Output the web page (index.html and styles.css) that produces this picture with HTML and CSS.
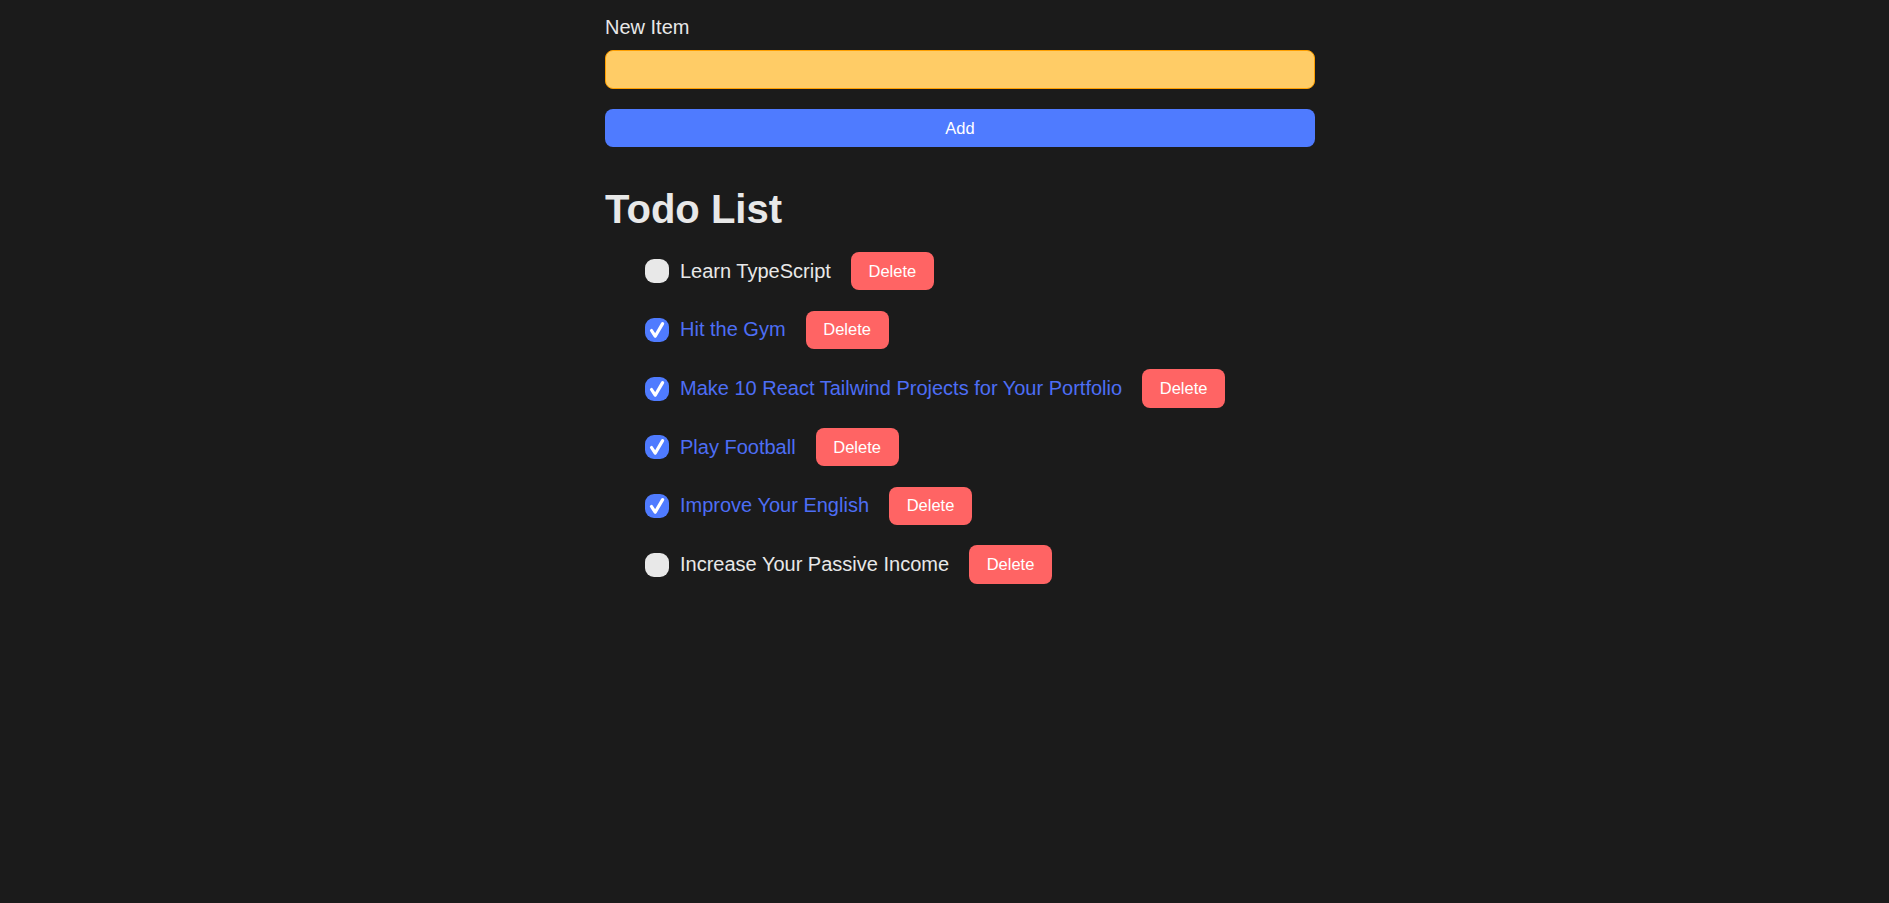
FILE: index.html
```html
<!DOCTYPE html>
<html lang="en">
<head>
<meta charset="utf-8">
<title>Todo List</title>
<link rel="stylesheet" href="styles.css">
</head>
<body>
<div class="app">
  <form class="new-item-form">
    <label class="form-label" for="item">New Item</label>
    <input class="form-input" type="text" id="item">
    <button class="btn-add" type="button">Add</button>
  </form>
  <h1 class="header">Todo List</h1>
  <ul class="list">
    <li class="row">
      <span class="box"></span>
      <span class="title">Learn TypeScript</span>
      <button class="btn-delete" type="button">Delete</button>
    </li>
    <li class="row done">
      <span class="box"><svg viewBox="0 0 24 24" width="24" height="24"><path d="M6.5 12.5 L10.2 18.2 L17.6 5.6" fill="none" stroke="#fff" stroke-width="3.2" stroke-linecap="round" stroke-linejoin="round"/></svg></span>
      <span class="title">Hit the Gym</span>
      <button class="btn-delete" type="button">Delete</button>
    </li>
    <li class="row done">
      <span class="box"><svg viewBox="0 0 24 24" width="24" height="24"><path d="M6.5 12.5 L10.2 18.2 L17.6 5.6" fill="none" stroke="#fff" stroke-width="3.2" stroke-linecap="round" stroke-linejoin="round"/></svg></span>
      <span class="title">Make 10 React Tailwind Projects for Your Portfolio</span>
      <button class="btn-delete" type="button">Delete</button>
    </li>
    <li class="row done">
      <span class="box"><svg viewBox="0 0 24 24" width="24" height="24"><path d="M6.5 12.5 L10.2 18.2 L17.6 5.6" fill="none" stroke="#fff" stroke-width="3.2" stroke-linecap="round" stroke-linejoin="round"/></svg></span>
      <span class="title">Play Football</span>
      <button class="btn-delete" type="button">Delete</button>
    </li>
    <li class="row done">
      <span class="box"><svg viewBox="0 0 24 24" width="24" height="24"><path d="M6.5 12.5 L10.2 18.2 L17.6 5.6" fill="none" stroke="#fff" stroke-width="3.2" stroke-linecap="round" stroke-linejoin="round"/></svg></span>
      <span class="title">Improve Your English</span>
      <button class="btn-delete" type="button">Delete</button>
    </li>
    <li class="row">
      <span class="box"></span>
      <span class="title">Increase Your Passive Income</span>
      <button class="btn-delete" type="button">Delete</button>
    </li>
  </ul>
</div>
</body>
</html>
```
FILE: styles.css
```css
html, body {
  margin: 0;
  padding: 0;
  background: #1b1b1b;
}

body {
  font-family: "Liberation Sans", Arial, sans-serif;
  color: #e8e8e8;
  min-height: 903px;
}

.app {
  width: 710px;
  margin-left: 605px;
  padding-top: 16px;
}

.new-item-form {
  display: flex;
  flex-direction: column;
}

.form-label {
  font-size: 20px;
  line-height: 23px;
  color: #e8e8e8;
  margin-bottom: 11px;
}

.form-input {
  box-sizing: border-box;
  height: 39px;
  width: 100%;
  margin: 0;
  background: #ffcc66;
  border: 1.5px solid #ff9f00;
  border-radius: 8px;
  outline: none;
  font-family: inherit;
  font-size: 16px;
  padding: 0 10px;
}

.btn-add {
  margin-top: 20px;
  height: 38px;
  width: 100%;
  border: none;
  border-radius: 8px;
  background: #4f7bff;
  color: #ffffff;
  font-family: inherit;
  font-size: 16.5px;
  padding: 0;
}

.header {
  margin: 39px 0 0;
  font-size: 40px;
  line-height: 46px;
  font-weight: bold;
  color: #e8e8e8;
}

.list {
  list-style: none;
  margin: 20px 0 0;
  padding: 0 0 0 40px;
  display: flex;
  flex-direction: column;
  gap: 20.3px;
}

.row {
  display: flex;
  align-items: center;
  height: 38.4px;
}

.box {
  width: 24px;
  height: 24px;
  border-radius: 9px;
  background: #e8e8e8;
  margin-right: 11px;
  flex: none;
  display: flex;
}

.done .box {
  background: #4f7bff;
}

.title {
  font-size: 20px;
  color: #e8e8e8;
  white-space: nowrap;
}

.done .title {
  color: #4d6ef5;
}

.btn-delete {
  margin-left: 20px;
  height: 38.4px;
  width: 83px;
  border: none;
  border-radius: 8px;
  background: #ff6464;
  color: #ffffff;
  font-family: inherit;
  font-size: 16.5px;
  padding: 0;
}
```
